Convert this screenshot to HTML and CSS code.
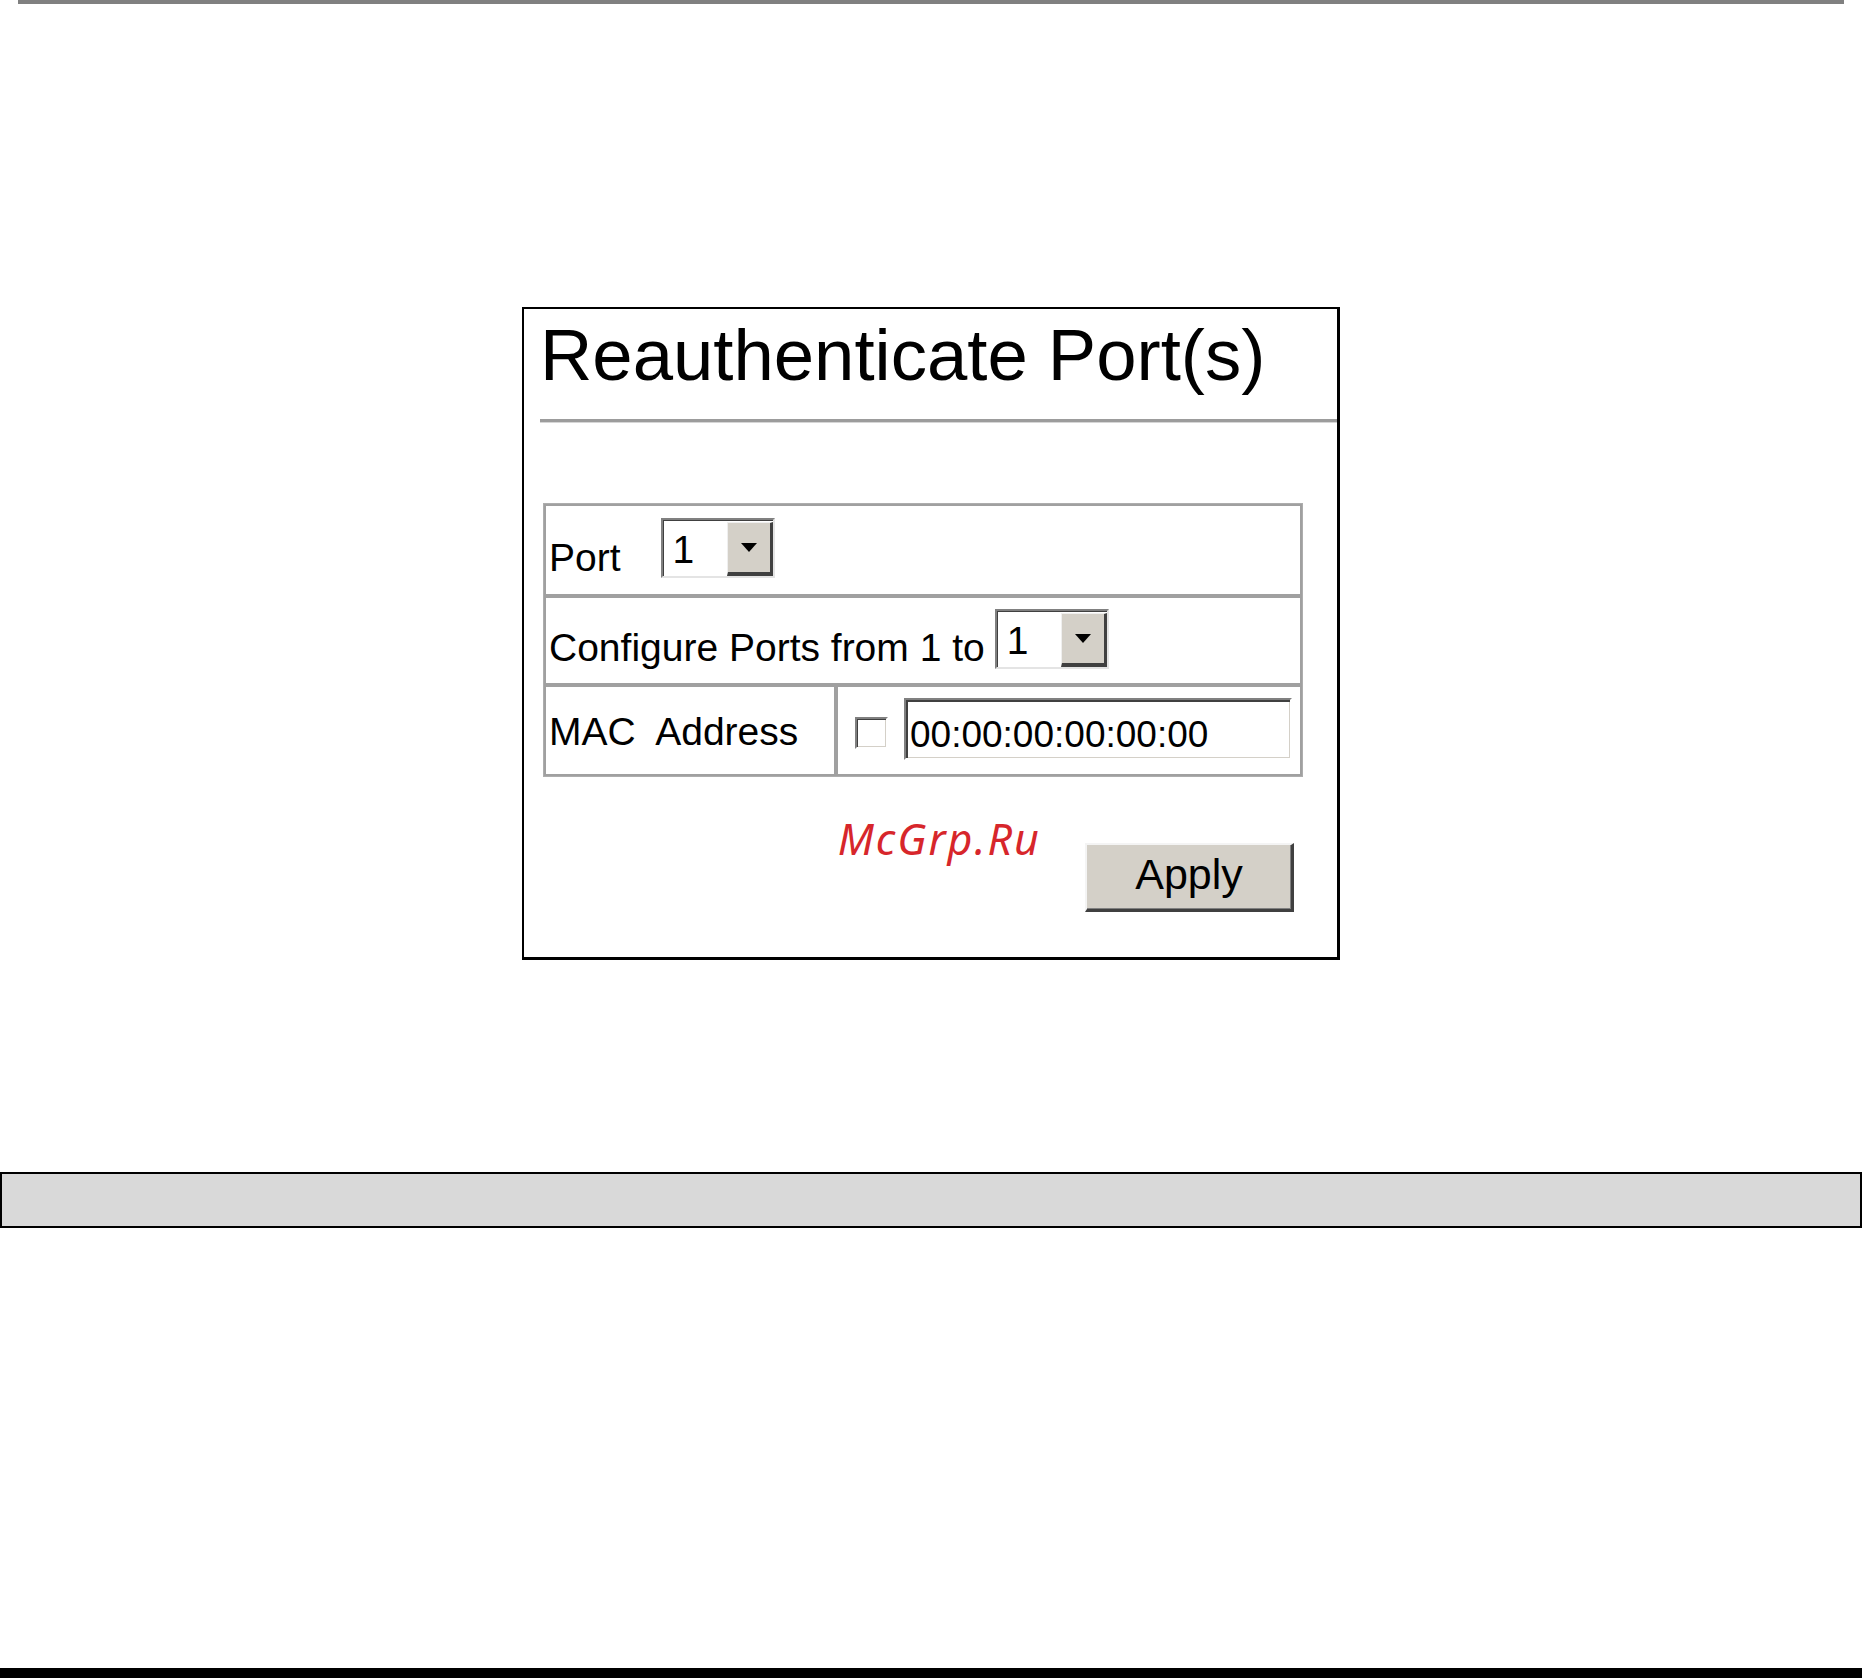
FILE: index.html
```html
<!DOCTYPE html>
<html lang="en">
<head>
    <meta charset="UTF-8">
    <meta name="viewport" content="width=device-width, initial-scale=1.0">
    <title>Reauthenticate Port(s)</title>
    <link rel="stylesheet" href="styles.css">
</head>
<body>
    <div class="top-rule"></div>

    <!-- dialog panel -->
    <div class="panel">
        <h1 class="panel-title">Reauthenticate Port(s)</h1>
        <div class="title-rule"></div>

        <table class="form-table">
            <tr>
                <td colspan="2">
                    <div class="cell row-port">
                        <span class="label">Port</span>
                        <div class="select port-select">
                            <span class="select-value">1</span>
                            <span class="select-btn"><i class="arrow"></i></span>
                        </div>
                    </div>
                </td>
            </tr>
            <tr>
                <td colspan="2">
                    <div class="cell row-range">
                        <span class="label">Configure Ports from 1 to</span>
                        <div class="select range-select">
                            <span class="select-value">1</span>
                            <span class="select-btn"><i class="arrow"></i></span>
                        </div>
                    </div>
                </td>
            </tr>
            <tr>
                <td>
                    <div class="cell row-mac mac-name">
                        <span class="label">MAC  Address</span>
                    </div>
                </td>
                <td>
                    <div class="cell row-mac mac-value">
                        <span class="checkbox"></span>
                        <div class="text-input">00:00:00:00:00:00</div>
                    </div>
                </td>
            </tr>
        </table>

        <div class="panel-footer">
            <span class="watermark">McGrp.Ru</span>
            <button class="apply-btn">Apply</button>
        </div>
    </div>

    <!-- note bar and page rule -->
    <div class="note-bar"></div>
    <div class="bottom-rule"></div>
</body>
</html>
```

FILE: styles.css
```css
body {
    margin: 0;
    background-color: #fff;
    font-family: "Liberation Sans", Arial, sans-serif;
    color: #000;
}
.top-rule {
    height: 4px;
    margin: 0 18px;
    background-color: #808080;
}

/* panel */
.panel {
    width: 818px;
    box-sizing: border-box;
    margin: 303px auto 0;
    border-style: solid;
    border-color: #000;
    border-width: 2px 3px 3px 2px;
    background-color: #fff;
}
.panel-title {
    margin: 10px 0 0 16px;
    font-size: 72.5px;
    font-weight: normal;
    line-height: 72px;
    white-space: nowrap;
}
.title-rule {
    height: 3px;
    margin: 28px 0 0 16px;
    background-color: #9c9c9c;
    border-bottom: 1px solid #d6d6d6;
}

/* form table */
.form-table {
    margin: 80px 0 0 19px;
    border-collapse: separate;
    border-spacing: 0;
    border: 1px solid #adadad;
}
.form-table td {
    padding: 0;
    border: 2px solid #a0a0a0;
    vertical-align: top;
}
.cell {
    display: flex;
    align-items: flex-start;
    box-sizing: border-box;
    padding-left: 3px;
    font-size: 39px;
    line-height: 39px;
    white-space: pre;
}
.row-port {
    height: 88px;
}
.row-port .label {
    margin-top: 32px;
}
.port-select {
    margin: 12px 0 0 40px;
}
.row-range {
    height: 85px;
}
.row-range .label {
    margin-top: 30px;
}
.range-select {
    margin: 11px 0 0 10px;
}
.row-mac {
    height: 87px;
}
.mac-name {
    width: 288px;
}
.mac-name .label {
    margin-top: 25px;
}
.mac-value {
    width: 462px;
    padding-left: 17px;
}

/* select box */
.select {
    display: flex;
    width: 114px;
    height: 60px;
    box-sizing: border-box;
    border: 2px solid;
    border-color: #808080 #e4e4e4 #e4e4e4 #808080;
    box-shadow: inset 1px 1px 0 #404040;
    background-color: #fff;
}
.select-value {
    flex: 1;
    padding: 10px 0 0 10px;
}
.select-btn {
    display: flex;
    align-items: center;
    justify-content: center;
    width: 46px;
    box-sizing: border-box;
    margin-top: 2px;
    background-color: #d4d0c8;
    border-style: solid;
    border-width: 1px 3px 4px 1px;
    border-color: #efefef #404040 #404040 #efefef;
}
.arrow {
    width: 0;
    height: 0;
    border-left: 8px solid transparent;
    border-right: 8px solid transparent;
    border-top: 9px solid #000;
}

/* checkbox and text field */
.checkbox {
    width: 33px;
    height: 32px;
    box-sizing: border-box;
    margin-top: 30px;
    border: 2px solid;
    border-color: #808080 #fff #fff #808080;
    box-shadow: inset 1px 1px 0 #404040, inset -1px -1px 0 #d4d0c8;
    background-color: #fff;
}
.text-input {
    width: 388px;
    height: 62px;
    box-sizing: border-box;
    margin: 11px 0 0 16px;
    padding: 16px 0 0 4px;
    border: 2px solid;
    border-color: #808080 #fff #fff #808080;
    box-shadow: inset 2px 2px 0 #404040, inset -1px -1px 0 #d4d0c8;
    font-size: 37px;
    line-height: 37px;
}

/* footer */
.panel-footer {
    display: flex;
    justify-content: flex-end;
    align-items: flex-start;
    padding: 0 43px 45px 0;
}
.watermark {
    margin: 41px 44px 0 0;
    font-family: "Noto Sans", sans-serif;
    font-style: italic;
    font-size: 43px;
    line-height: 42px;
    letter-spacing: 2px;
    color: #d7262b;
}
.apply-btn {
    width: 209px;
    height: 69px;
    box-sizing: border-box;
    margin-top: 66px;
    padding: 0 0 5px;
    border-style: solid;
    border-width: 2px 3px 3px 2px;
    border-color: #f4f4f4 #404040 #404040 #f4f4f4;
    box-shadow: inset -1px -1px 0 #808080;
    background-color: #d4d0c8;
    font-family: "Liberation Sans", Arial, sans-serif;
    font-size: 43px;
    line-height: 43px;
    color: #000;
}

.note-bar {
    height: 56px;
    box-sizing: border-box;
    margin-top: 212px;
    border: 2px solid #000;
    background-color: #d9d9d9;
}
.bottom-rule {
    height: 10px;
    margin-top: 440px;
    background-color: #000;
}
```
